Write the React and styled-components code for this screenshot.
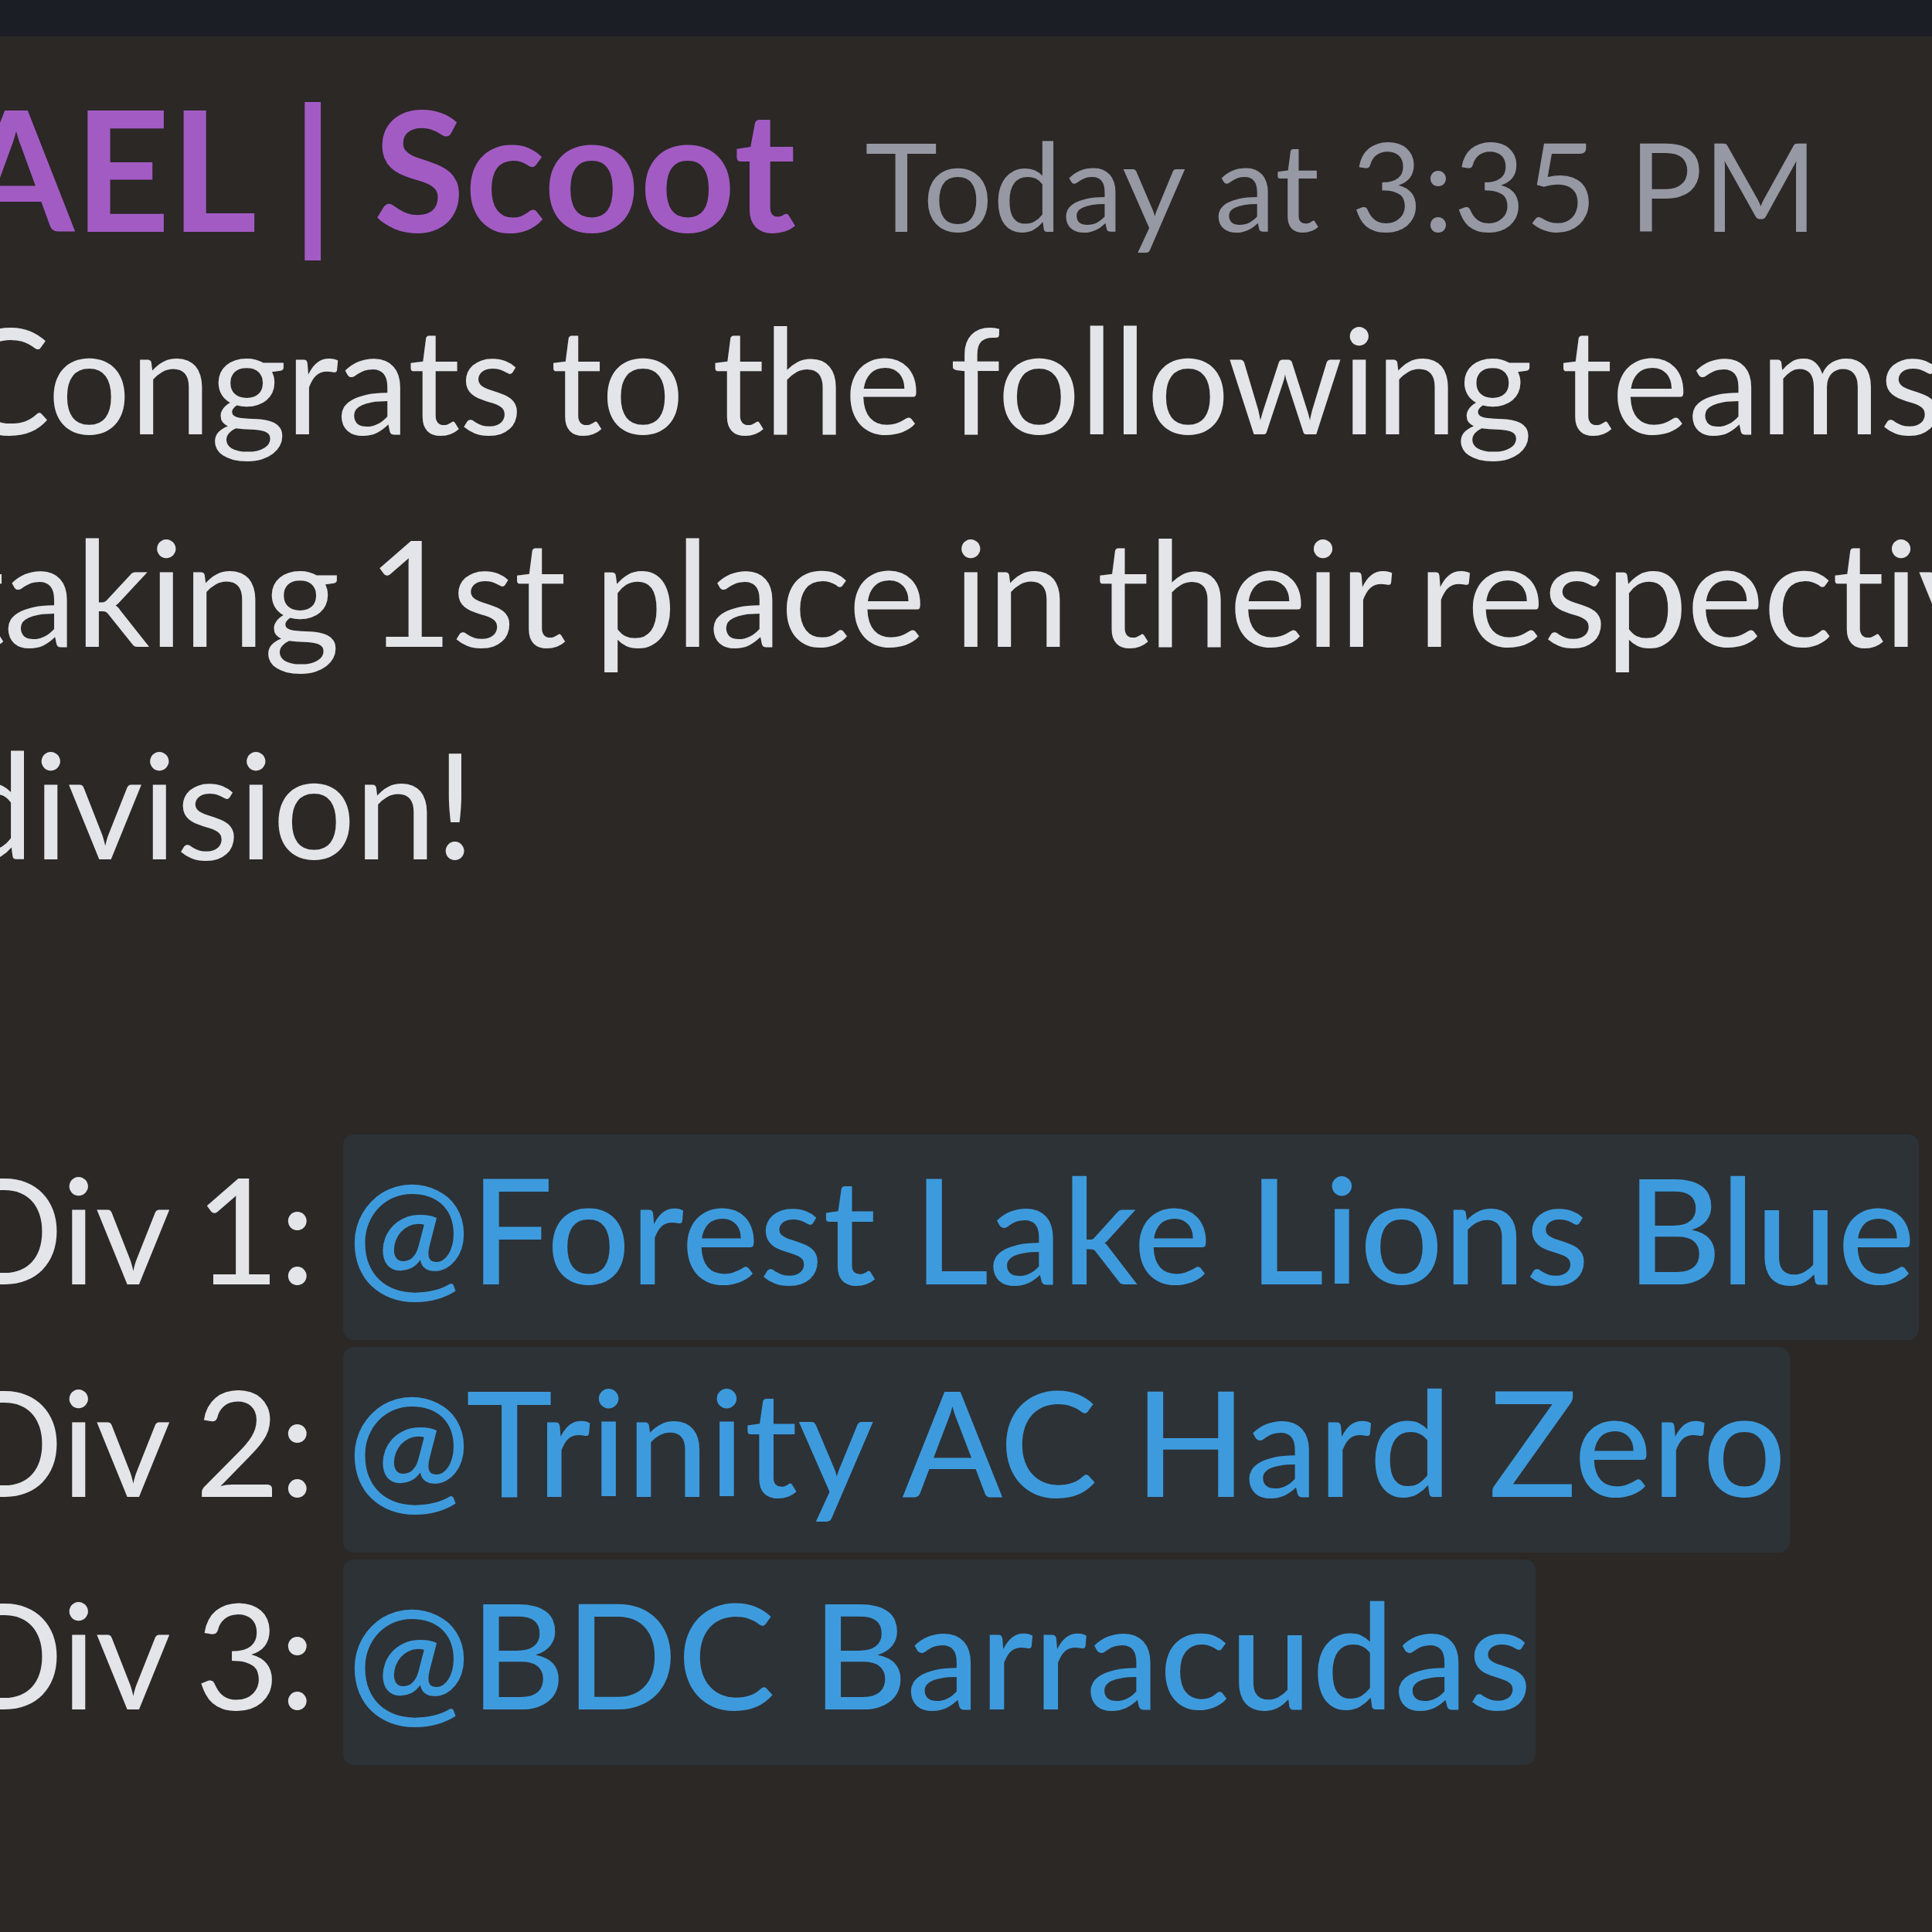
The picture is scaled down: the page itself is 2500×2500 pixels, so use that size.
import React from 'react'
import styled, { createGlobalStyle } from 'styled-components'

const GlobalStyle = createGlobalStyle`
    html, body {
        margin: 0;
        padding: 0;
        background: #2b2826;
        overflow: hidden;
    }
    body {
        width: 2500px;
        height: 2500px;
    }
`

const Page = styled.div`
    width: 2500px;
    height: 2500px;
    display: flex;
    flex-direction: column;
    background: #2b2826;
    overflow: hidden;
    font-family: Lato, "Noto Sans", sans-serif;
`

const TopBar = styled.div`
    height: 47px;
    flex-shrink: 0;
    background: #1c1e26;
`

const Message = styled.div`
    display: flex;
    flex-direction: column;
    width: 3100px;
    margin-left: -62px;
    padding-top: 40px;
`

const Header = styled.div`
    display: flex;
    align-items: baseline;
    gap: 89px;
    height: 264px;
`

const Name = styled.span`
    font-size: 216px;
    font-weight: 700;
    color: #a35bc4;
    white-space: nowrap;
    margin-left: 8px;
    word-spacing: -2px;
`

const Stamp = styled.span`
    font-size: 160px;
    font-weight: 400;
    color: #9698a3;
    white-space: nowrap;
`

const Body = styled.div`
    font-size: 190px;
    line-height: 275px;
    letter-spacing: -1.5px;
    word-spacing: -10px;
    color: #e4e5e9;
`

const Mention = styled.span`
    color: #3d9bdd;
    background: #2d3237;
    border-radius: 14px;
    padding: 6px 5px 32px;
    letter-spacing: 0;
    word-spacing: 0;
    font-weight: 500;
`

const teams = [
    { div: 1, name: 'Forest Lake Lions Blue' },
    { div: 2, name: 'Trinity AC Hard Zero' },
    { div: 3, name: 'BDC Barracudas' },
]

function App() {
    return (
        <Page>
            <GlobalStyle />
            <TopBar />
            <Message>
                <Header>
                    <Name>AEL | Scoot</Name>
                    <Stamp>Today at 3:35 PM</Stamp>
                </Header>
                <Body>
                    Congrats to the following teams for taking 1st place in their respective division!
                    <br />
                    <br />
                    {teams.map((t) => (
                        <React.Fragment key={t.div}>
                            Div {t.div}: <Mention>@{t.name}</Mention>
                            <br />
                        </React.Fragment>
                    ))}
                </Body>
            </Message>
        </Page>
    )
}

export default App
